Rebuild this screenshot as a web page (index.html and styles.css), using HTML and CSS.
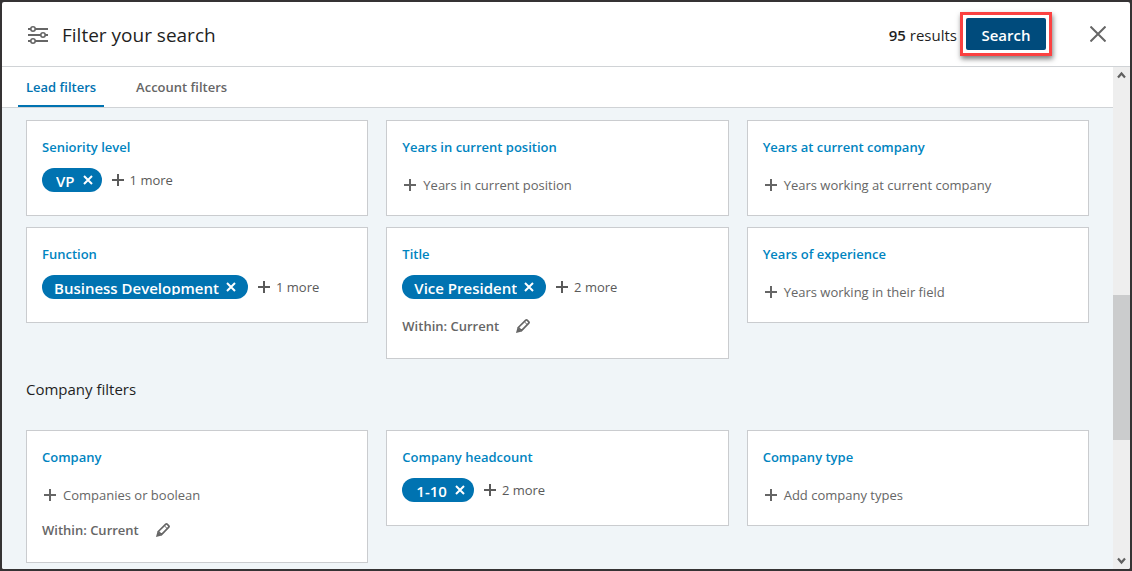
FILE: index.html
```
<!DOCTYPE html>
<html lang="en">
<head>
  <meta charset="UTF-8">
  <meta name="viewport" content="width=device-width, initial-scale=1">
  <title>Filter your search</title>
  <link rel="stylesheet" href="styles.css">
</head>
<body>

  <!-- shared icons -->
  <svg class="sprite" aria-hidden="true">
    <symbol id="plus" viewBox="0 0 12 12">
      <path d="M6 0v12M0 6h12" fill="none" stroke="currentColor" stroke-width="2"/>
    </symbol>
    <symbol id="cross" viewBox="0 0 10 10">
      <path d="M1 1l8 8M9 1l-8 8" fill="none" stroke="currentColor" stroke-width="2"/>
    </symbol>
    <symbol id="pencil" viewBox="0 0 14 14">
      <path d="M2.300 8.500L9.800 1.200q.7-.6 1.300 0l1.700 1.700q.6.700 0 1.300L5.500 11.700z" fill="none" stroke="currentColor" stroke-width="1.700" stroke-linejoin="round"/>
      <path d="M8.600 3l2.400 2.400" fill="none" stroke="currentColor" stroke-width="1"/>
      <path d="M0 14l1.500-5.800 4.300 4.300z" fill="currentColor"/>
    </symbol>
  </svg>

  <div class="modal" role="dialog" aria-labelledby="modal-title">
    <header class="modal-header">
      <svg class="filter-icon" viewBox="0 -2 20 20" fill="none" stroke="#666" stroke-width="2" aria-hidden="true">
        <path d="M0 3h3M7 3h13M0 9h13M17 9h3M0 15h3M7 15h13"/>
        <circle cx="5" cy="3" r="2.200" stroke-width="1.600"/>
        <circle cx="15" cy="9" r="2.200" stroke-width="1.600"/>
        <circle cx="5" cy="15" r="2.200" stroke-width="1.600"/>
      </svg>
      <h1 id="modal-title">Filter your search</h1>
      <p class="results"><strong>95</strong> results</p>
      <div class="highlight">
        <button class="search-btn" type="button">Search</button>
      </div>
      <button class="close-btn" type="button" aria-label="Close">
        <svg viewBox="0 0 16 16"><path d="M.5 .5l15 15M15.500 .5l-15 15" fill="none" stroke="#666" stroke-width="2"/></svg>
      </button>
    </header>

    <div class="modal-body">
      <div class="main">
        <nav class="tabs">
          <button class="tab active" type="button">Lead filters</button>
          <button class="tab" type="button">Account filters</button>
        </nav>

        <div class="content">
          <div class="grid">
            <section class="card">
              <h3>Seniority level</h3>
              <div class="chips">
                <span class="chip short"><span class="chip-text">VP</span><button type="button" aria-label="Remove VP"><svg><use href="#cross"/></svg></button></span>
                <button class="more" type="button"><svg><use href="#plus"/></svg>1 more</button>
              </div>
            </section>

            <section class="card">
              <h3>Years in current position</h3>
              <button class="add" type="button"><svg><use href="#plus"/></svg>Years in current position</button>
            </section>

            <section class="card">
              <h3>Years at current company</h3>
              <button class="add" type="button"><svg><use href="#plus"/></svg>Years working at current company</button>
            </section>

            <section class="card">
              <h3>Function</h3>
              <div class="chips">
                <span class="chip"><span class="chip-text">Business Development</span><button type="button" aria-label="Remove Business Development"><svg><use href="#cross"/></svg></button></span>
                <button class="more" type="button"><svg><use href="#plus"/></svg>1 more</button>
              </div>
            </section>

            <section class="card">
              <h3>Title</h3>
              <div class="chips">
                <span class="chip"><span class="chip-text">Vice President</span><button type="button" aria-label="Remove Vice President"><svg><use href="#cross"/></svg></button></span>
                <button class="more" type="button"><svg><use href="#plus"/></svg>2 more</button>
              </div>
              <div class="within">
                <span>Within: Current</span>
                <button type="button" aria-label="Edit"><svg><use href="#pencil"/></svg></button>
              </div>
            </section>

            <section class="card">
              <h3>Years of experience</h3>
              <button class="add" type="button"><svg><use href="#plus"/></svg>Years working in their field</button>
            </section>
          </div>

          <h2>Company filters</h2>

          <div class="grid">
            <section class="card">
              <h3>Company</h3>
              <button class="add" type="button"><svg><use href="#plus"/></svg>Companies or boolean</button>
              <div class="within">
                <span>Within: Current</span>
                <button type="button" aria-label="Edit"><svg><use href="#pencil"/></svg></button>
              </div>
            </section>

            <section class="card">
              <h3>Company headcount</h3>
              <div class="chips">
                <span class="chip short"><span class="chip-text">1-10</span><button type="button" aria-label="Remove 1-10"><svg><use href="#cross"/></svg></button></span>
                <button class="more" type="button"><svg><use href="#plus"/></svg>2 more</button>
              </div>
            </section>

            <section class="card">
              <h3>Company type</h3>
              <button class="add" type="button"><svg><use href="#plus"/></svg>Add company types</button>
            </section>
          </div>
        </div>
      </div>

      <div class="scrollbar" aria-hidden="true">
        <svg viewBox="0 0 17 17"><path d="M5 10.500l3.500-4 3.500 4" fill="none" stroke="#606060" stroke-width="2.200"/></svg>
        <div class="track"><div class="thumb"></div></div>
        <svg viewBox="0 0 17 17"><path d="M5 6.500l3.500 4 3.500-4" fill="none" stroke="#606060" stroke-width="2.200"/></svg>
      </div>
    </div>
  </div>

</body>
</html>
```
FILE: styles.css
```
* {
  box-sizing: border-box;
}

body {
  margin: 0;
  padding: 2px;
  height: 100vh;
  background: #353334;
  font-family: 'Open Sans', 'Noto Sans', sans-serif;
  font-size: 13px;
  color: #1f1f1f;
  overflow: hidden;
}

h1, h2, h3, p {
  margin: 0;
}

button {
  padding: 0;
  border: 0;
  background: none;
  font: inherit;
  color: inherit;
  cursor: pointer;
}

svg {
  display: block;
  flex: none;
}

.sprite {
  position: absolute;
  width: 0;
  height: 0;
}

.modal {
  display: flex;
  flex-direction: column;
  height: 100%;
  background: #fff;
  border-radius: 2px;
  overflow: hidden;
}

.modal-header {
  display: flex;
  align-items: center;
  flex: none;
  height: 65px;
  padding: 0 24px 0 26px;
  border-bottom: 1px solid #d0d3d6;
}

.filter-icon {
  width: 20px;
  height: 20px;
  margin-right: 14px;
}

.modal-header h1 {
  flex: 1;
  padding-top: 2px;
  font-size: 19px;
  line-height: 24px;
  font-weight: 400;
}

.results {
  padding-top: 2px;
  margin-right: 3px;
  font-size: 15px;
  line-height: 20px;
}

.results strong {
  font-weight: 600;
}

.highlight {
  padding: 3px;
  border: 3px solid #fb4141;
  box-shadow: 1px 3px 5px rgba(0, 0, 0, 0.5);
}

.search-btn {
  display: block;
  width: 80px;
  height: 32px;
  padding-top: 2px;
  border-radius: 2px;
  background: #004b7c;
  color: #fff;
  font-size: 15px;
  font-weight: 600;
}

.close-btn {
  margin-left: 38px;
}

.close-btn svg {
  width: 16px;
  height: 16px;
}

.modal-body {
  display: flex;
  flex: 1;
  min-height: 0;
}

.main {
  display: flex;
  flex-direction: column;
  flex: 1;
  min-width: 0;
}

.tabs {
  display: flex;
  flex: none;
  gap: 24px;
  height: 41px;
  padding: 0 16px;
  border-bottom: 1px solid #d0d3d6;
}

.tab {
  padding: 2px 8px 0;
  border-bottom: 2px solid transparent;
  font-weight: 600;
  color: #666;
}

.tab.active {
  border-color: #0073b1;
  color: #0073b1;
}

.content {
  flex: 1;
  padding: 12px 24px;
  background: #f0f5f8;
  overflow: hidden;
}

.content h2 {
  margin: 20px 0 31px;
  font-size: 15px;
  line-height: 20px;
  font-weight: 400;
}

.grid {
  display: grid;
  grid-template-columns: repeat(3, 1fr);
  gap: 11px 18px;
  align-items: start;
}

.card {
  min-height: 96px;
  padding: 16px 15px 22px;
  background: #fff;
  border: 1px solid #cacccf;
}

.card h3 {
  font-size: 13px;
  line-height: 20px;
  font-weight: 600;
  color: #0084bf;
}

.chips {
  display: flex;
  align-items: center;
  gap: 10px;
  margin-top: 11px;
}

.chip {
  display: flex;
  align-items: center;
  gap: 7px;
  height: 24px;
  padding: 0 12px;
  border-radius: 12px;
  background: #0073b1;
  color: #fff;
}

.chip.short {
  gap: 8px;
  padding: 0 9px 0 14px;
}

/* label sits low in the pill and is cut just under the baseline */
.chip-text {
  height: 20px;
  padding-top: 4px;
  align-self: flex-start;
  font-size: 15px;
  line-height: 18px;
  font-weight: 600;
  overflow: hidden;
}

.chip svg {
  width: 10px;
  height: 10px;
}

.more,
.add {
  display: flex;
  align-items: center;
}

.more {
  gap: 6px;
  line-height: 20px;
  color: #5a5a5a;
}

.add {
  gap: 7px;
  margin: 20px 0 0 2px;
  line-height: 16px;
  color: #666;
}

.more svg,
.add svg {
  width: 12px;
  height: 12px;
}

.within {
  display: flex;
  align-items: center;
  gap: 17px;
  margin-top: 17px;
  line-height: 20px;
  font-weight: 600;
  color: #666;
}

.within svg {
  width: 14px;
  height: 14px;
}

.scrollbar {
  display: flex;
  flex-direction: column;
  flex: none;
  width: 17px;
  background: #eeeeee;
}

.scrollbar svg {
  width: 17px;
  height: 17px;
}

.track {
  flex: 1;
}

.track::before {
  content: '';
  display: block;
  height: 45%;
}

.thumb {
  height: 31%;
  background: #cbcccd;
}
```
